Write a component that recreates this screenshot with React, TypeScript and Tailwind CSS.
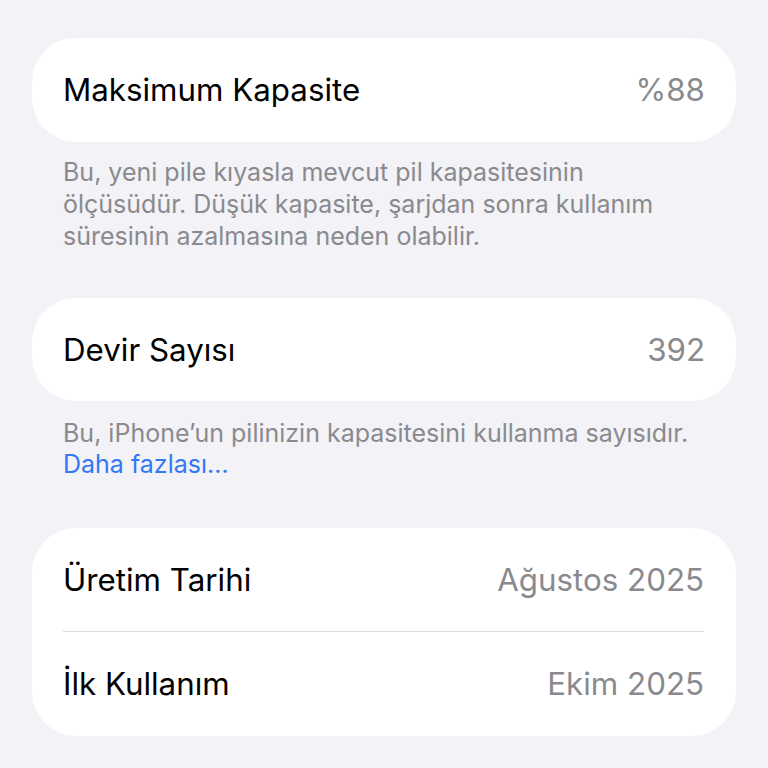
import React from "react";

const font = { fontFamily: "Inter, 'Noto Sans', sans-serif" };

function Row({ label, value, h }: { label: string; value: string; h: string }) {
  return (
    <div className={`flex ${h} items-center justify-between`}>
      <span className="pt-[2px] text-[31.3px] leading-none text-black">{label}</span>
      <span className="pt-[2px] text-[31.3px] leading-none text-[#8a8a8e]">{value}</span>
    </div>
  );
}

export default function App() {
  return (
    <div
      className="min-h-[768px] w-[768px] bg-[#f2f2f7] px-[32px] pt-[38px]"
      style={font}
    >
      <div className="rounded-[44px] bg-white px-[31px]">
        <Row label="Maksimum Kapasite" value="%88" h="h-[104px]" />
      </div>
      <div className="px-[31px] pb-[46px] pt-[14px] text-[25px] leading-[32px] text-[#8a8a8e]">
        <div>Bu, yeni pile kıyasla mevcut pil kapasitesinin</div>
        <div>ölçüsüdür. Düşük kapasite, şarjdan sonra kullanım</div>
        <div>süresinin azalmasına neden olabilir.</div>
      </div>

      <div className="rounded-[44px] bg-white px-[31px]">
        <Row label="Devir Sayısı" value="392" h="h-[103px]" />
      </div>
      <div className="px-[31px] pb-[48px] pt-[17px] text-[25px] leading-[31px] text-[#8a8a8e]">
        <div className="whitespace-nowrap">Bu, iPhone’un pilinizin kapasitesini kullanma sayısıdır.</div>
        <div className="text-[#3478f6]">Daha fazlası…</div>
      </div>

      <div className="rounded-[44px] bg-white pl-[31px]">
        <div className="pr-[32px]">
          <Row label="Üretim Tarihi" value="Ağustos 2025" h="h-[103px]" />
        </div>
        <div className="mr-[32px] h-px bg-[#dcdce0]" />
        <div className="pr-[32px]">
          <Row label="İlk Kullanım" value="Ekim 2025" h="h-[104px]" />
        </div>
      </div>
    </div>
  );
}
